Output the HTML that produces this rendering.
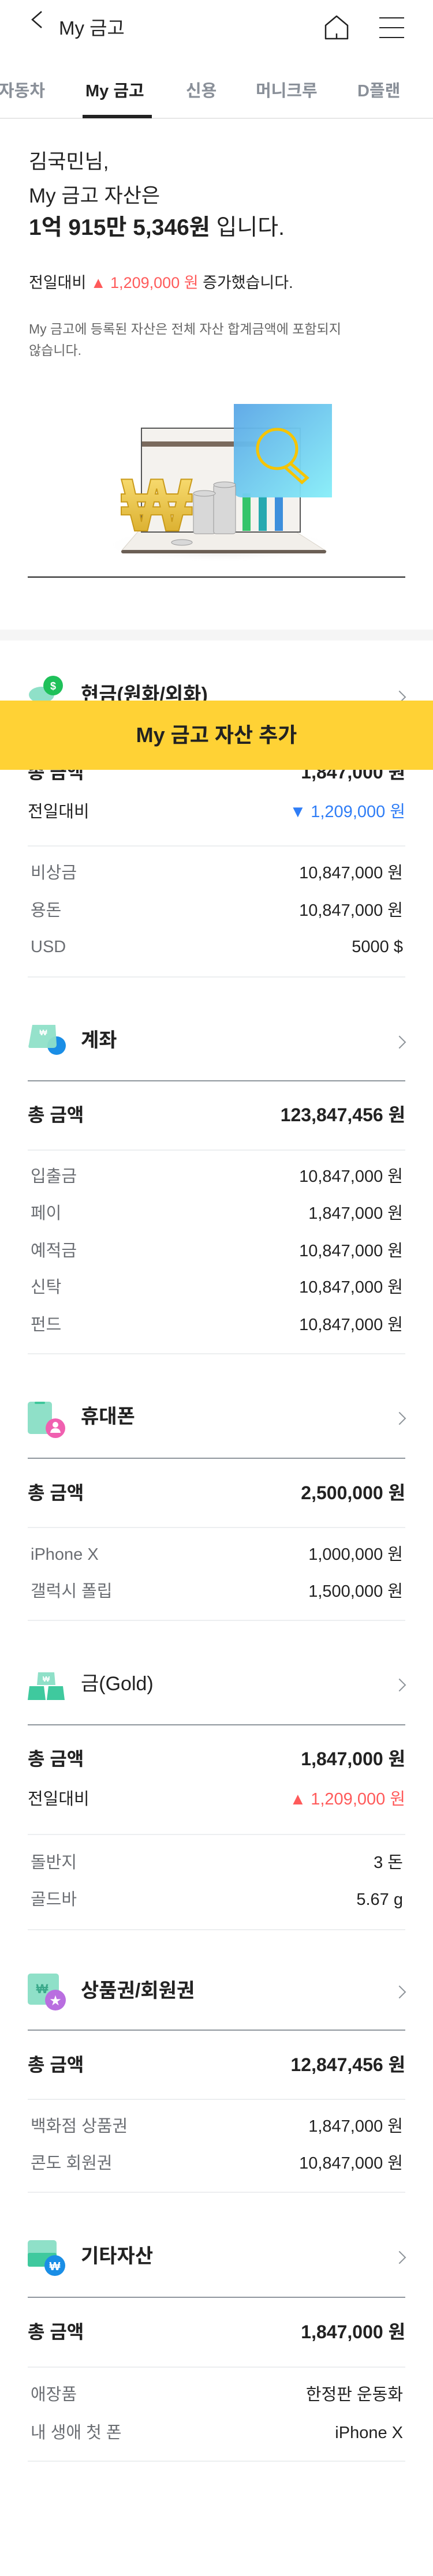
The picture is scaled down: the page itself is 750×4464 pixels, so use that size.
<!DOCTYPE html>
<html><head><meta charset="utf-8">
<style>
*{margin:0;padding:0;box-sizing:border-box}
body{width:750px;height:4464px;position:relative;background:#fff;font-family:"Liberation Sans","Noto Sans CJK KR",sans-serif;color:#222;overflow:hidden}
.a{position:absolute;white-space:nowrap;line-height:44px;height:44px}
.r{right:48px;text-align:right}
.l{left:50px}
.il{left:53px;color:#6b6e73;font-size:29px}
.iv{right:52px;text-align:right;font-size:29px;color:#222}
.tl{left:48px;font-size:32px;font-weight:bold}
.tv{right:48px;text-align:right;font-size:32px;font-weight:bold}
.hd{left:140px;font-size:34px;font-weight:bold}
.chev{position:absolute;right:50px;width:16px;height:16px;border-top:2px solid #8e949a;border-right:2px solid #8e949a;transform:rotate(45deg)}
.dv{position:absolute;left:48px;width:654px;height:2px;background:#8e959c}
.dl{position:absolute;left:48px;width:654px;height:2px;background:#eceef0}
.ic{position:absolute;left:48px;width:66px;height:66px}
.red{color:#ff5a5a}.blue{color:#2f7df6}
</style></head><body>

<!-- header -->
<svg style="position:absolute;left:50px;top:18px" width="26" height="32" viewBox="0 0 26 32"><path d="M22 2 L6 16 L22 30" fill="none" stroke="#222" stroke-width="2.5"/></svg>
<div class="a" style="left:102px;top:27px;font-size:33px">My 금고</div>
<svg style="position:absolute;left:561px;top:24px" width="44" height="46" viewBox="0 0 44 46"><path d="M3 20 L22 4 L41 20 L41 43 L3 43 Z M22 43 L22 34" fill="none" stroke="#222" stroke-width="2.5" stroke-linejoin="round"/></svg>
<div style="position:absolute;left:657px;top:30px;width:43px;height:2px;background:#222"></div>
<div style="position:absolute;left:657px;top:47px;width:43px;height:2px;background:#222"></div>
<div style="position:absolute;left:657px;top:64px;width:43px;height:2px;background:#222"></div>

<!-- tabs -->
<div class="a" style="left:-2px;top:136px;font-size:29px;font-weight:bold;color:#8a9099">자동차</div>
<div class="a" style="left:148px;top:136px;font-size:29px;font-weight:bold;color:#222">My 금고</div>
<div class="a" style="left:322px;top:136px;font-size:29px;font-weight:bold;color:#8a9099">신용</div>
<div class="a" style="left:443px;top:136px;font-size:29px;font-weight:bold;color:#8a9099">머니크루</div>
<div class="a" style="left:619px;top:136px;font-size:29px;font-weight:bold;color:#8a9099">D플랜</div>
<div style="position:absolute;left:0;top:204px;width:750px;height:2px;background:#e6e6e6"></div>
<div style="position:absolute;left:143px;top:199px;width:120px;height:6px;background:#222"></div>

<!-- greeting -->
<div class="a l" style="top:259px;font-size:35px">김국민님,</div>
<div class="a l" style="top:318px;font-size:35px">My 금고 자산은</div>
<div class="a l" style="top:373px;font-size:39px"><b>1억 915만 5,346원</b> 입니다.</div>
<div class="a l" style="top:468px;font-size:27px">전일대비 <span class="red">▲ 1,209,000 원</span> 증가했습니다.</div>
<div class="a l" style="top:552px;font-size:23px;color:#666;line-height:36px">My 금고에 등록된 자산은 전체 자산 합계금액에 포함되지</div>
<div class="a l" style="top:589px;font-size:23px;color:#666;line-height:36px">않습니다.</div>

<!-- illustration -->
<svg style="position:absolute;left:180px;top:690px" width="430" height="290" viewBox="0 0 430 290">
<defs>
<linearGradient id="bl" x1="0" y1="0" x2="1" y2="1"><stop offset="0" stop-color="#5aa6e6"/><stop offset="1" stop-color="#86eef8"/></linearGradient>
<linearGradient id="gd" x1="0" y1="0" x2="0" y2="1"><stop offset="0" stop-color="#ffe680"/><stop offset="1" stop-color="#d4a520"/></linearGradient>
<radialGradient id="sh"><stop offset="0" stop-color="#ccc"/><stop offset="1" stop-color="#fff" stop-opacity="0"/></radialGradient>
</defs>
<ellipse cx="200" cy="255" rx="200" ry="30" fill="url(#sh)"/>
<path d="M30 265 L60 230 L330 230 L385 265 Z" fill="#f2efea" stroke="#d8d2c8"/>
<rect x="30" y="263" width="355" height="6" rx="3" fill="#6b5f55"/>
<rect x="65" y="52" width="275" height="180" fill="#f4f2ee" stroke="#555" stroke-width="2"/>
<rect x="66" y="75" width="200" height="9" fill="#7a6a5d"/>
<rect x="240" y="165" width="14" height="65" fill="#35c46a"/>
<rect x="268" y="170" width="14" height="60" fill="#27a9b0"/>
<rect x="296" y="170" width="14" height="60" fill="#3d8fdc"/>
<path d="M225 10 L395 10 Q395 10 395 20 L395 172 L240 172 Q225 172 225 158 Z" fill="url(#bl)" opacity="0.95"/>
<circle cx="300" cy="88" r="34" fill="none" stroke="#f6c400" stroke-width="5"/>
<path d="M322 112 L352 138 L343 146 L314 120" fill="none" stroke="#f6c400" stroke-width="5"/>
<text x="30" y="230" font-family="Liberation Sans" font-weight="bold" font-size="130" fill="url(#gd)" stroke="#c99a1a" stroke-width="2">₩</text>
<g fill="#d8d8d8" stroke="#999">
<rect x="155" y="165" width="38" height="70" rx="4"/><rect x="190" y="150" width="38" height="85" rx="4"/>
<ellipse cx="174" cy="165" rx="19" ry="5"/><ellipse cx="209" cy="150" rx="19" ry="5"/>
<ellipse cx="135" cy="250" rx="18" ry="5"/>
</g>
</svg>
<div style="position:absolute;left:48px;top:999px;width:654px;height:2px;background:#222"></div>
<div style="position:absolute;left:0;top:1091px;width:750px;height:19px;background:#f5f5f5"></div>

<!-- section 1 현금 -->
<svg class="ic" style="top:1168px" viewBox="0 0 66 66"><ellipse cx="24" cy="36" rx="22" ry="14" fill="#8fe0c8"/><circle cx="44" cy="20" r="17" fill="#1fc15a"/><text x="44" y="27" text-anchor="middle" font-family="Liberation Sans" font-weight="bold" font-size="18" fill="#fff">$</text></svg>
<div class="a hd" style="top:1182px">현금(원화/외화)</div>
<div class="chev" style="top:1200px"></div>
<div class="a tl" style="top:1316px">총 금액</div>
<div class="a tv" style="top:1316px">1,847,000 원</div>
<div class="a tl" style="top:1385px;font-weight:normal;font-size:29px">전일대비</div>
<div class="a r blue" style="top:1385px;font-size:29px">▼ 1,209,000 원</div>
<div class="dl" style="top:1465px"></div>
<div class="a il" style="top:1491px">비상금</div><div class="a iv" style="top:1491px">10,847,000 원</div>
<div class="a il" style="top:1556px">용돈</div><div class="a iv" style="top:1556px">10,847,000 원</div>
<div class="a il" style="top:1619px">USD</div><div class="a iv" style="top:1619px">5000 $</div>
<div class="dl" style="top:1692px"></div>

<!-- yellow bar -->
<div style="position:absolute;left:0;top:1214px;width:750px;height:120px;background:#ffd235;text-align:center;line-height:120px;font-size:36px;font-weight:bold;color:#222">My 금고 자산 추가</div>

<!-- section 2 계좌 -->
<svg class="ic" style="top:1770px" viewBox="0 0 66 66"><circle cx="50" cy="42" r="16" fill="#1a8ee6"/><path d="M8 6 L48 6 L50 40 Q50 46 44 46 L4 46 Q0 46 2 40 Z" fill="#8fe0c8" opacity="0.95"/><text x="27" y="24" text-anchor="middle" font-family="Liberation Sans" font-weight="bold" font-size="14" fill="#fff">₩</text></svg>
<div class="a hd" style="top:1781px">계좌</div>
<div class="chev" style="top:1798px"></div>
<div class="dv" style="top:1872px"></div>
<div class="a tl" style="top:1910px">총 금액</div><div class="a tv" style="top:1910px">123,847,456 원</div>
<div class="dl" style="top:1992px"></div>
<div class="a il" style="top:2017px">입출금</div><div class="a iv" style="top:2017px">10,847,000 원</div>
<div class="a il" style="top:2081px">페이</div><div class="a iv" style="top:2081px">1,847,000 원</div>
<div class="a il" style="top:2146px">예적금</div><div class="a iv" style="top:2146px">10,847,000 원</div>
<div class="a il" style="top:2209px">신탁</div><div class="a iv" style="top:2209px">10,847,000 원</div>
<div class="a il" style="top:2274px">펀드</div><div class="a iv" style="top:2274px">10,847,000 원</div>
<div class="dl" style="top:2345px"></div>

<!-- section 3 휴대폰 -->
<svg class="ic" style="top:2427px" viewBox="0 0 66 66"><rect x="0" y="2" width="42" height="56" rx="5" fill="#8fe0c8"/><rect x="12" y="2" width="18" height="4" rx="2" fill="#3fc79b"/><circle cx="48" cy="48" r="17" fill="#f060b0"/><circle cx="48" cy="42" r="5" fill="#fff"/><path d="M39 56 Q40 48 48 48 Q56 48 57 56 Z" fill="#fff"/></svg>
<div class="a hd" style="top:2433px">휴대폰</div>
<div class="chev" style="top:2450px"></div>
<div class="dv" style="top:2526px"></div>
<div class="a tl" style="top:2565px">총 금액</div><div class="a tv" style="top:2565px">2,500,000 원</div>
<div class="dl" style="top:2646px"></div>
<div class="a il" style="top:2672px">iPhone X</div><div class="a iv" style="top:2672px">1,000,000 원</div>
<div class="a il" style="top:2736px">갤럭시 폴립</div><div class="a iv" style="top:2736px">1,500,000 원</div>
<div class="dl" style="top:2807px"></div>

<!-- section 4 금 -->
<svg class="ic" style="top:2890px" viewBox="0 0 66 66"><path d="M18 8 L46 8 L48 30 L16 30 Z" fill="#8fe0c8"/><text x="32" y="24" text-anchor="middle" font-family="Liberation Sans" font-weight="bold" font-size="13" fill="#fff">₩</text><path d="M3 32 L28 32 L31 56 L0 56 Z" fill="#3fc99e"/><path d="M36 32 L61 32 L64 56 L33 56 Z" fill="#3fc99e"/></svg>
<div class="a hd" style="top:2896px;font-weight:normal">금(Gold)</div>
<div class="chev" style="top:2912px"></div>
<div class="dv" style="top:2988px"></div>
<div class="a tl" style="top:3026px">총 금액</div><div class="a tv" style="top:3026px">1,847,000 원</div>
<div class="a tl" style="top:3096px;font-weight:normal;font-size:29px">전일대비</div>
<div class="a r red" style="top:3096px;font-size:29px">▲ 1,209,000 원</div>
<div class="dl" style="top:3178px"></div>
<div class="a il" style="top:3206px">돌반지</div><div class="a iv" style="top:3206px">3 돈</div>
<div class="a il" style="top:3270px">골드바</div><div class="a iv" style="top:3270px">5.67 g</div>
<div class="dl" style="top:3343px"></div>

<!-- section 5 상품권 -->
<svg class="ic" style="top:3420px" viewBox="0 0 66 66"><rect x="0" y="0" width="54" height="54" rx="5" fill="#8fe0c8"/><text x="25" y="34" text-anchor="middle" font-family="Liberation Sans" font-weight="bold" font-size="22" fill="#3aa98a">₩</text><circle cx="48" cy="46" r="18" fill="#b96ee0"/><text x="48" y="55" text-anchor="middle" font-family="DejaVu Sans" font-size="24" fill="#fff">★</text></svg>
<div class="a hd" style="top:3428px">상품권/회원권</div>
<div class="chev" style="top:3444px"></div>
<div class="dv" style="top:3517px"></div>
<div class="a tl" style="top:3556px">총 금액</div><div class="a tv" style="top:3556px">12,847,456 원</div>
<div class="dl" style="top:3637px"></div>
<div class="a il" style="top:3663px">백화점 상품권</div><div class="a iv" style="top:3663px">1,847,000 원</div>
<div class="a il" style="top:3727px">콘도 회원권</div><div class="a iv" style="top:3727px">10,847,000 원</div>
<div class="dl" style="top:3798px"></div>

<!-- section 6 기타자산 -->
<svg class="ic" style="top:3882px" viewBox="0 0 66 66"><rect x="0" y="0" width="50" height="46" rx="5" fill="#8fe0c8"/><rect x="0" y="22" width="50" height="24" rx="3" fill="#3fc99e"/><circle cx="47" cy="44" r="18" fill="#1a8ee6"/><text x="47" y="52" text-anchor="middle" font-family="Liberation Sans" font-weight="bold" font-size="20" fill="#fff">₩</text></svg>
<div class="a hd" style="top:3888px">기타자산</div>
<div class="chev" style="top:3904px"></div>
<div class="dv" style="top:3980px"></div>
<div class="a tl" style="top:4019px">총 금액</div><div class="a tv" style="top:4019px">1,847,000 원</div>
<div class="dl" style="top:4101px"></div>
<div class="a il" style="top:4128px">애장품</div><div class="a iv" style="top:4128px">한정판 운동화</div>
<div class="a il" style="top:4194px">내 생애 첫 폰</div><div class="a iv" style="top:4194px">iPhone X</div>
<div class="dl" style="top:4264px"></div>
</body></html>
